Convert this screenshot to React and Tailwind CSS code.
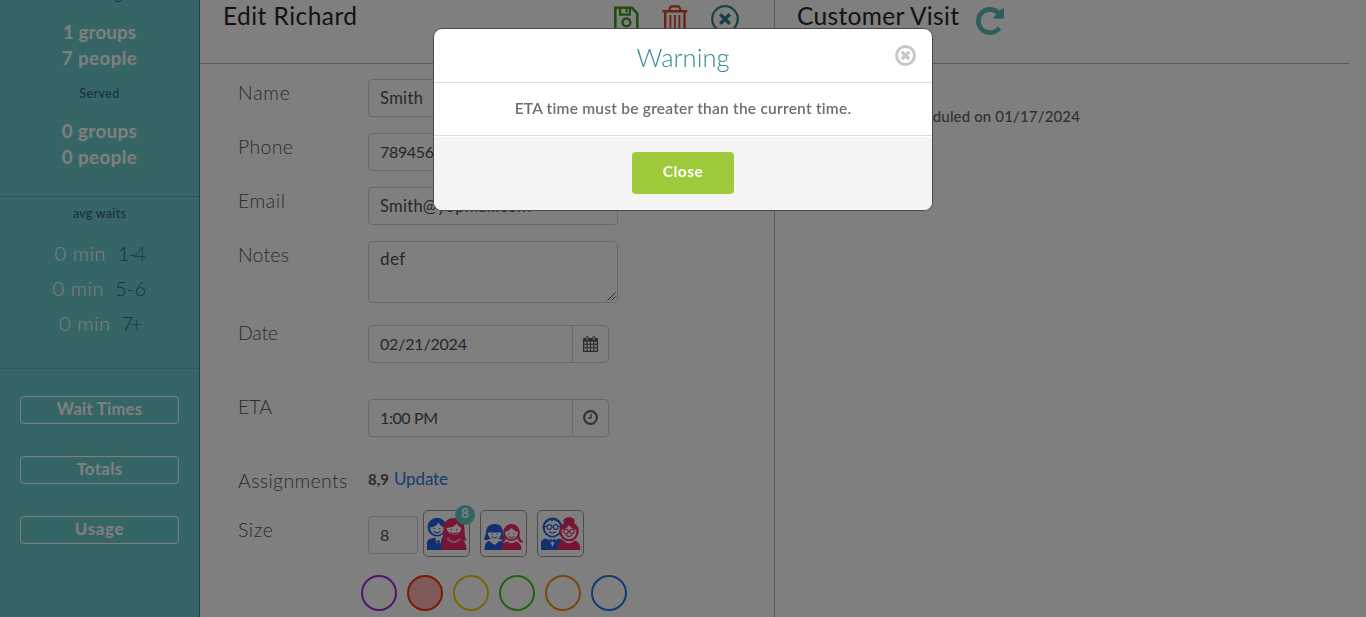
import React from "react";

const labelCls = "w-[130px] shrink-0 whitespace-nowrap text-[19.500px] leading-[28px] font-light text-[#5f5656]";
const inputCls = "flex items-center border border-[#ced4da] px-[11px] text-[#495057]";

function SaveIcon() {
  return (
    <svg width="26" height="28" viewBox="0 0 26 28" fill="none" stroke="#3f9a1c" strokeWidth="2.6">
      <path d="M2.300 1.800H19L24.300 7.500V26H2.300Z" />
      <path d="M7.100 2V8.600H16.900V2" strokeWidth="2.2" />
      <path d="M13.600 2.600V6.400" strokeWidth="2" />
      <circle cx="13.400" cy="16.400" r="3.900" strokeWidth="2.400" />
    </svg>
  );
}

function TrashIcon() {
  return (
    <svg width="26" height="30" viewBox="0 0 26 30" fill="none" stroke="#d8422a" strokeWidth="2.400">
      <path d="M.5 6.200H25.300M3.200 6.200V28.600H22.500V6.200" />
      <path d="M7.200 5.600L8.200 2.500Q8.600 1.400 9.800 1.400H16Q17.200 1.400 17.600 2.500L18.600 5.600" strokeWidth="2.200" />
      <path d="M8.400 10V25M12.900 10V25M17.400 10V25" strokeWidth="1.800" />
    </svg>
  );
}

function CancelIcon() {
  return (
    <svg width="28" height="28" viewBox="0 0 28 28" fill="none" stroke="#338090">
      <circle cx="14" cy="14" r="12.800" strokeWidth="2.200" />
      <path d="M9.200 9.200L18.800 18.800M18.800 9.200L9.200 18.800" strokeWidth="3.400" />
    </svg>
  );
}

function RefreshIcon() {
  return (
    <svg width="28" height="28" viewBox="128 128 1536 1536" fill="#5bbcb8">
      <path d="M1664 256v448q0 26-19 45t-45 19h-448q-42 0-59-40-17-39 14-69l138-138q-148-137-349-137-104 0-198.500 40.500t-163.500 109.500-109.500 163.500-40.500 198.500 40.500 198.500 109.500 163.500 163.500 109.500 198.500 40.500q119 0 225-52t179-147q7-10 23-12 15 0 25 9l137 138q9 8 9.500 20.500t-7.500 22.500q-109 132-264 204.500t-327 72.500q-156 0-298-61t-245-164-164-245-61-298 61-298 164-245 245-164 298-61q147 0 284.500 55.500t244.500 156.500l130-129q29-31 70-14 39 17 39 59z" />
    </svg>
  );
}

function CalendarIcon() {
  return (
    <svg width="15" height="16" viewBox="0 0 15 16">
      <path d="M1 2H14Q15 2 15 3V15Q15 16 14 16H1Q0 16 0 15V3Q0 2 1 2Z" fill="#555" />
      <path d="M1.200 5.500H3.600V7.800H1.200ZM4.600 5.500H7V7.800H4.600ZM8 5.500H10.400V7.800H8ZM11.400 5.500H13.800V7.800H11.400ZM1.200 8.800H3.600V11.200H1.200ZM4.600 8.800H7V11.200H4.600ZM8 8.800H10.400V11.200H8ZM11.400 8.800H13.800V11.200H11.400ZM1.200 12.200H3.600V14.800H1.200ZM4.600 12.200H7V14.800H4.600ZM8 12.200H10.400V14.800H8ZM11.400 12.200H13.800V14.800H11.400Z" fill="#f4f4f4" />
      <rect x="3" y=".5" width="2.400" height="4" rx="1.100" fill="#ddd" stroke="#555" strokeWidth=".9" />
      <rect x="9.600" y=".5" width="2.400" height="4" rx="1.100" fill="#ddd" stroke="#555" strokeWidth=".9" />
    </svg>
  );
}

function ClockIcon() {
  return (
    <svg className="mb-[2px]" width="15" height="15" viewBox="0 0 15 15" fill="none" stroke="#666">
      <circle cx="7.500" cy="7.500" r="6.400" strokeWidth="2.200" />
      <path d="M8 3.800V8.200H5" strokeWidth="1.300" />
    </svg>
  );
}

function Smile({ x, y, s = 1 }) {
  return (
    <g transform={`translate(${x} ${y}) scale(${s})`}>
      <circle cx="-2.600" cy="-1" r=".8" fill="currentColor" />
      <circle cx="2.600" cy="-1" r=".8" fill="currentColor" />
      <path d="M-3.400 1.600Q0 5.200 3.400 1.600" fill="none" stroke="currentColor" strokeWidth="1.100" />
    </g>
  );
}

function Adults() {
  return (
    <svg width="40" height="33" viewBox="0 0 40 33">
      <g className="text-[#2460e0]">
        <circle cx="10" cy="10.200" r="9.400" fill="currentColor" />
        <path d="M3 10.500Q9 10 11.500 5.500Q13 9 17.500 10.500A7.200 7.400 0 0 1 3 10.500Z" fill="#fff" />
        <Smile x="10" y="12.500" />
        <path d="M0 33V26Q0 22 4.500 21.500L8 20.500L11.500 25L15 20.500L20 22V33Z" fill="currentColor" />
        <path d="M8.500 21.500L11.700 32L15 21.500Z" fill="#fff" />
        <path d="M10.500 23H12.700L13 30L11.600 33L10.200 30Z" fill="currentColor" />
      </g>
      <g className="text-[#f02868]">
        <path d="M27 1C19 1 16.500 6 16.500 12C16.500 18 16 21 14 23.500H39.500C37.500 20 37.700 17 37.500 12C37.500 6 34.500 1 27 1Z" fill="currentColor" />
        <path d="M19.500 11Q27 10.500 29.500 6.500Q31 9.500 34.500 11A7.600 8 0 0 1 19.500 11Z" fill="#fff" />
        <Smile x="27" y="13.500" />
        <path d="M14 33Q14 23 21 22H33Q39.500 23 39.500 33Z" fill="currentColor" />
        <path d="M20.500 21.500Q27 28.500 33.500 21.500" fill="none" stroke="#fff" strokeWidth="1.500" strokeDasharray="1.500 .6" />
      </g>
    </svg>
  );
}

function Kids() {
  return (
    <svg width="40" height="33" viewBox="0 0 40 33">
      <g className="text-[#2460e0]">
        <path d="M10.500 7C4 7 2 11.500 2 16L0 22.500Q2.500 24 5 22H16Q19 24 21 22L19 16C19 11 17 7 10.500 7Z" fill="currentColor" />
        <path d="M3.700 15.500H17.300A6.800 7.400 0 0 1 3.700 15.500Z" fill="#fff" />
        <Smile x="10.500" y="18" s={0.9} />
        <path d="M.5 33Q.5 25 5 23.800L10.500 28L16 23.800L20 26V33Z" fill="currentColor" />
      </g>
      <g className="text-[#f02868]">
        <circle cx="27.500" cy="15.500" r="8.400" fill="currentColor" />
        <path d="M20 18Q19.500 23 16.500 25Q20 27 22 22ZM35 18Q36 23 39.500 25Q36 27 33.500 22Z" fill="currentColor" />
        <path d="M21 15Q25 14 27.500 11Q30 14 34 15A6.500 7 0 0 1 21 15Z" fill="#fff" />
        <Smile x="27.500" y="17.500" s={0.9} />
        <path d="M17.500 33Q17.500 25 23.500 24.500Q27.500 28 31.500 24.500Q37.500 25 37.500 33Z" fill="currentColor" />
      </g>
    </svg>
  );
}

function Seniors() {
  return (
    <svg width="40" height="33" viewBox="0 0 40 33">
      <g className="text-[#2460e0]">
        <circle cx="11.500" cy="10.500" r="10" fill="currentColor" />
        <path d="M3.700 8.500Q6 4 9.500 3L11 5L12.500 2.800L14.500 4Q18 5 19.200 8.500Q20 17.500 11.500 19Q3 17.500 3.700 8.500Z" fill="#fff" />
        <circle cx="8.300" cy="10" r="2.400" fill="none" stroke="currentColor" strokeWidth="1.100" />
        <circle cx="14.700" cy="10" r="2.400" fill="none" stroke="currentColor" strokeWidth="1.100" />
        <path d="M3 9.500H6M10.700 10H12.300M17 9.500H20M8 14.500Q11.500 17.500 15 14.500" fill="none" stroke="currentColor" strokeWidth="1.100" />
        <path d="M0 33V26Q0 22 5 21.500L11.500 25L18 21.500L22 23V33Z" fill="currentColor" />
        <path d="M7.500 21L11.500 30L15.500 21Z" fill="#fff" />
        <path d="M8.500 21.500L11.500 23L14.500 21.500V26L11.500 24.500L8.500 26Z" fill="currentColor" />
      </g>
      <g className="text-[#f02868]">
        <ellipse cx="28" cy="4" rx="5.800" ry="3.800" fill="currentColor" />
        <circle cx="28" cy="14.500" r="9.800" fill="currentColor" />
        <path d="M20.500 13Q26 11.500 28 8Q30 11.500 35.500 13Q35.500 21.500 28 22.300Q20.500 21.500 20.500 13Z" fill="#fff" />
        <circle cx="25" cy="14.500" r="2.200" fill="none" stroke="currentColor" strokeWidth="1.100" />
        <circle cx="31" cy="14.500" r="2.200" fill="none" stroke="currentColor" strokeWidth="1.100" />
        <path d="M27 14.500H29M24.800 18Q28 21 31.200 18" fill="none" stroke="currentColor" strokeWidth="1.100" />
        <path d="M16 33Q16 24.500 22.500 23.500Q28 29 33.500 23.500Q39.500 24.500 39.500 33Z" fill="currentColor" />
      </g>
    </svg>
  );
}

function WaitRow({ range, rangeCls, gap }) {
  return (
    <div className="flex h-[35px] items-center justify-center text-[20px] font-light">
      <span className="tracking-[0.6px] text-white">0 min</span>
      <span className={`${gap} text-[#32696e] ${rangeCls}`}>{range}</span>
    </div>
  );
}

function SideButton({ children, textCls }) {
  return (
    <button className={`flex h-[28px] w-[159px] items-center justify-center rounded-[4px] border border-white pb-[2px] font-bold text-white ${textCls}`}>
      {children}
    </button>
  );
}

function Sidebar() {
  return (
    <aside className="flex h-full w-[200px] shrink-0 flex-col border-r border-[#4a7c7e] bg-[#6ccacc] text-center">
      <div className="h-[196px] overflow-hidden">
        <div className="-mt-[13px] h-[32px] text-[12.500px] leading-[18px] font-medium tracking-[0.4px] text-[#33686b]">Waiting</div>
        <div className="text-[18.700px] leading-[26px] font-bold text-white">
          <div className="tracking-[0.130px]">1 groups</div>
          <div className="tracking-[0.440px]">7 people</div>
        </div>
        <div className="mt-[14px] h-[33px] text-[12.500px] leading-[18px] font-medium tracking-[0.420px] text-[#33686b]">Served</div>
        <div className="text-[18.700px] leading-[26px] font-bold tracking-[0.420px] text-white">
          <div>0 groups</div>
          <div>0 people</div>
        </div>
      </div>
      <div className="h-[172px] border-t border-[#5bb0b4]">
        <div className="mt-[8px] mb-[12px] text-[12.500px] leading-[18px] font-medium tracking-[0.260px] text-[#33686b]">avg waits</div>
        <WaitRow range="1-4" gap="ml-[12px]" rangeCls="tracking-[-1.400px]" />
        <WaitRow range="5-6" gap="ml-[11px]" rangeCls="tracking-[0.200px]" />
        <WaitRow range="7+" gap="ml-[11px]" rangeCls="tracking-[-2.500px]" />
      </div>
      <div className="flex flex-1 flex-col items-center gap-[32px] border-t border-[#5bb0b4] pt-[27px]">
        <SideButton textCls="text-[16.500px] tracking-[0.300px]">Wait Times</SideButton>
        <SideButton textCls="text-[17px] tracking-[0.300px]">Totals</SideButton>
        <SideButton textCls="text-[17px] tracking-[0.600px]">Usage</SideButton>
      </div>
    </aside>
  );
}

function TextRow({ label, labelTracking, value, valueCls }) {
  return (
    <div className="flex h-[54px]">
      <div className={`${labelCls} ${labelTracking}`}>{label}</div>
      <div className={`${inputCls} h-[38px] w-[250px] rounded-[4px] ${valueCls}`}>{value}</div>
    </div>
  );
}

function PickerRow({ label, labelTracking, value, valueCls, icon }) {
  return (
    <div className="flex h-[74px]">
      <div className={`${labelCls} -mt-[6px] ${labelTracking}`}>{label}</div>
      <div className={`${inputCls} h-[38px] w-[205px] rounded-l-[4px] ${valueCls}`}>{value}</div>
      <div className="-ml-px flex h-[38px] w-[37px] items-center justify-center rounded-r-[4px] border border-[#ced4da]">{icon}</div>
    </div>
  );
}

function SizeBox({ children, badge }) {
  return (
    <div className="relative flex h-[47px] w-[47px] items-center justify-center rounded-[5px] border border-[#999] pb-[1px]">
      {children}
      {badge && (
        <span className="absolute -top-[6px] left-[31px] flex h-[20px] w-[20px] items-center justify-center rounded-full bg-[#66c8c8] pb-[2px] text-[13px] font-bold text-white">
          {badge}
        </span>
      )}
    </div>
  );
}

function EditPanel() {
  return (
    <section className="flex w-[575px] shrink-0 flex-col border-r border-[#b5b5b5]">
      <header className="flex h-[64px] border-b border-[#b5b5b5] pl-[23px]">
        <h1 className="w-[390px] text-[24.500px] leading-[32px] tracking-[0.450px] whitespace-nowrap text-[#2d2424]">Edit Richard</h1>
        <div className="flex items-start">
          <div className="mt-[6px]"><SaveIcon /></div>
          <div className="mt-[5px] ml-[23px]"><TrashIcon /></div>
          <div className="mt-[5px] ml-[23px]"><CancelIcon /></div>
        </div>
      </header>
      <div className="pt-[15px] pl-[38px]">
        <TextRow label="Name" labelTracking="tracking-[0.770px]" value="Smith" valueCls="text-[16.500px] tracking-[0.390px]" />
        <TextRow label="Phone" labelTracking="tracking-[0.340px]" value="7894561230" valueCls="text-[16px] tracking-[-0.340px]" />
        <TextRow label="Email" labelTracking="tracking-[0.560px]" value="Smith@yopmail.com" valueCls="text-[16.500px] tracking-[0.290px]" />
        <div className="flex h-[84px]">
          <div className={`${labelCls} tracking-[0.190px]`}>Notes</div>
          <div className="flex h-[62px] w-[250px] justify-between rounded-[4px] border border-[#ced4da] pl-[11px] text-[17px] leading-[24px] text-[#495057]">
            <span className="mt-[5px] tracking-[0.400px]">def</span>
            <svg className="mr-px mb-px self-end" width="9" height="9" viewBox="0 0 9 9" stroke="#555" fill="none">
              <path d="M.5 8.500L8.500 .5M4.500 8.500L8.500 4.500" />
            </svg>
          </div>
        </div>
        <PickerRow label="Date" labelTracking="tracking-[-0.230px]" value="02/21/2024" valueCls="text-[16px] tracking-[-0.190px]" icon={<CalendarIcon />} />
        <PickerRow label="ETA" labelTracking="tracking-[0px]" value="1:00 PM" valueCls="text-[16px] tracking-[-0.400px]" icon={<ClockIcon />} />
        <div className="flex h-[37px]">
          <div className={`${labelCls} -mt-[6px] tracking-[0.350px]`}>Assignments</div>
          <div className="flex leading-[24px]">
            <span className="-mt-[6px] w-[26px] text-[15px] font-bold text-[#5f5656]">8,9</span>
            <a className="-mt-[6px] text-[17px] tracking-[-0.130px] text-[#2b78e0]">Update</a>
          </div>
        </div>
        <div className="flex h-[65px]">
          <div className={`${labelCls} mt-[6px] tracking-[0.580px]`}>Size</div>
          <div className={`${inputCls} mt-[6px] h-[38px] w-[50px] rounded-[4px] text-[16px]`}>8</div>
          <div className="ml-[5px] flex gap-[10px]">
            <SizeBox badge="8"><Adults /></SizeBox>
            <SizeBox><Kids /></SizeBox>
            <SizeBox><Seniors /></SizeBox>
          </div>
        </div>
        <div className="ml-[123px] flex gap-[10px]">
          <span className="h-[36px] w-[36px] rounded-full border-2 border-[#a828d8]" />
          <span className="h-[36px] w-[36px] rounded-full border-2 border-[#f83010] bg-[#ffb0b0]" />
          <span className="h-[36px] w-[36px] rounded-full border-2 border-[#e8cc10]" />
          <span className="h-[36px] w-[36px] rounded-full border-2 border-[#38c820]" />
          <span className="h-[36px] w-[36px] rounded-full border-2 border-[#f09018]" />
          <span className="h-[36px] w-[36px] rounded-full border-2 border-[#2c70f0]" />
        </div>
      </div>
    </section>
  );
}

function VisitPanel() {
  return (
    <section className="flex-1">
      <header className="mr-[17px] flex h-[64px] border-b border-[#b5b5b5] pl-[22px]">
        <h1 className="w-[179px] text-[24.500px] leading-[32px] tracking-[0.330px] whitespace-nowrap text-[#2d2424]">Customer Visit</h1>
        <div className="mt-[7px]"><RefreshIcon /></div>
      </header>
      <p className="mt-[41px] w-[305px] text-right text-[15px] leading-[22px] font-medium tracking-[0.140px] text-[#6b6060]">Scheduled on 01/17/2024</p>
    </section>
  );
}

function WarningModal() {
  return (
    <div className="fixed inset-0 flex items-start justify-center bg-black/50">
      <div className="mt-[28px] flex h-[183px] w-[500px] flex-col overflow-hidden rounded-[9px] border border-[#4a4a4a] bg-white text-center">
        <div className="relative h-[54px] shrink-0 border-b border-[#dcdce4]">
          <h2 className="text-[25.500px] leading-[56px] font-light tracking-[0.040px] text-[#338d93]">Warning</h2>
          <svg className="absolute top-[16px] right-[16px]" width="21" height="21" viewBox="0 0 21 21" fill="none" stroke="#c8c8c8">
            <circle cx="10.500" cy="10.500" r="9" strokeWidth="3" />
            <path d="M6.800 6.800L14.200 14.200M14.200 6.800L6.800 14.200" strokeWidth="3.400" />
          </svg>
        </div>
        <div className="h-[53px] shrink-0 border-b border-[#dcdce4] text-[15.500px] leading-[50px] font-semibold tracking-[0.230px] text-[#766b6b]">
          ETA time must be greater than the current time.
        </div>
        <div className="mt-px flex flex-1 items-start justify-center bg-[#f4f4f4] pt-[15px]">
          <button className="h-[42px] w-[102px] rounded-[4px] bg-[#9eca3c] pb-[2px] text-[15.500px] font-bold tracking-[0.470px] text-white">Close</button>
        </div>
      </div>
    </div>
  );
}

export default function App() {
  return (
    <div className="flex h-[617px] w-full overflow-hidden bg-white font-['Lato','Open_Sans',sans-serif]">
      <Sidebar />
      <EditPanel />
      <VisitPanel />
      <WarningModal />
    </div>
  );
}
